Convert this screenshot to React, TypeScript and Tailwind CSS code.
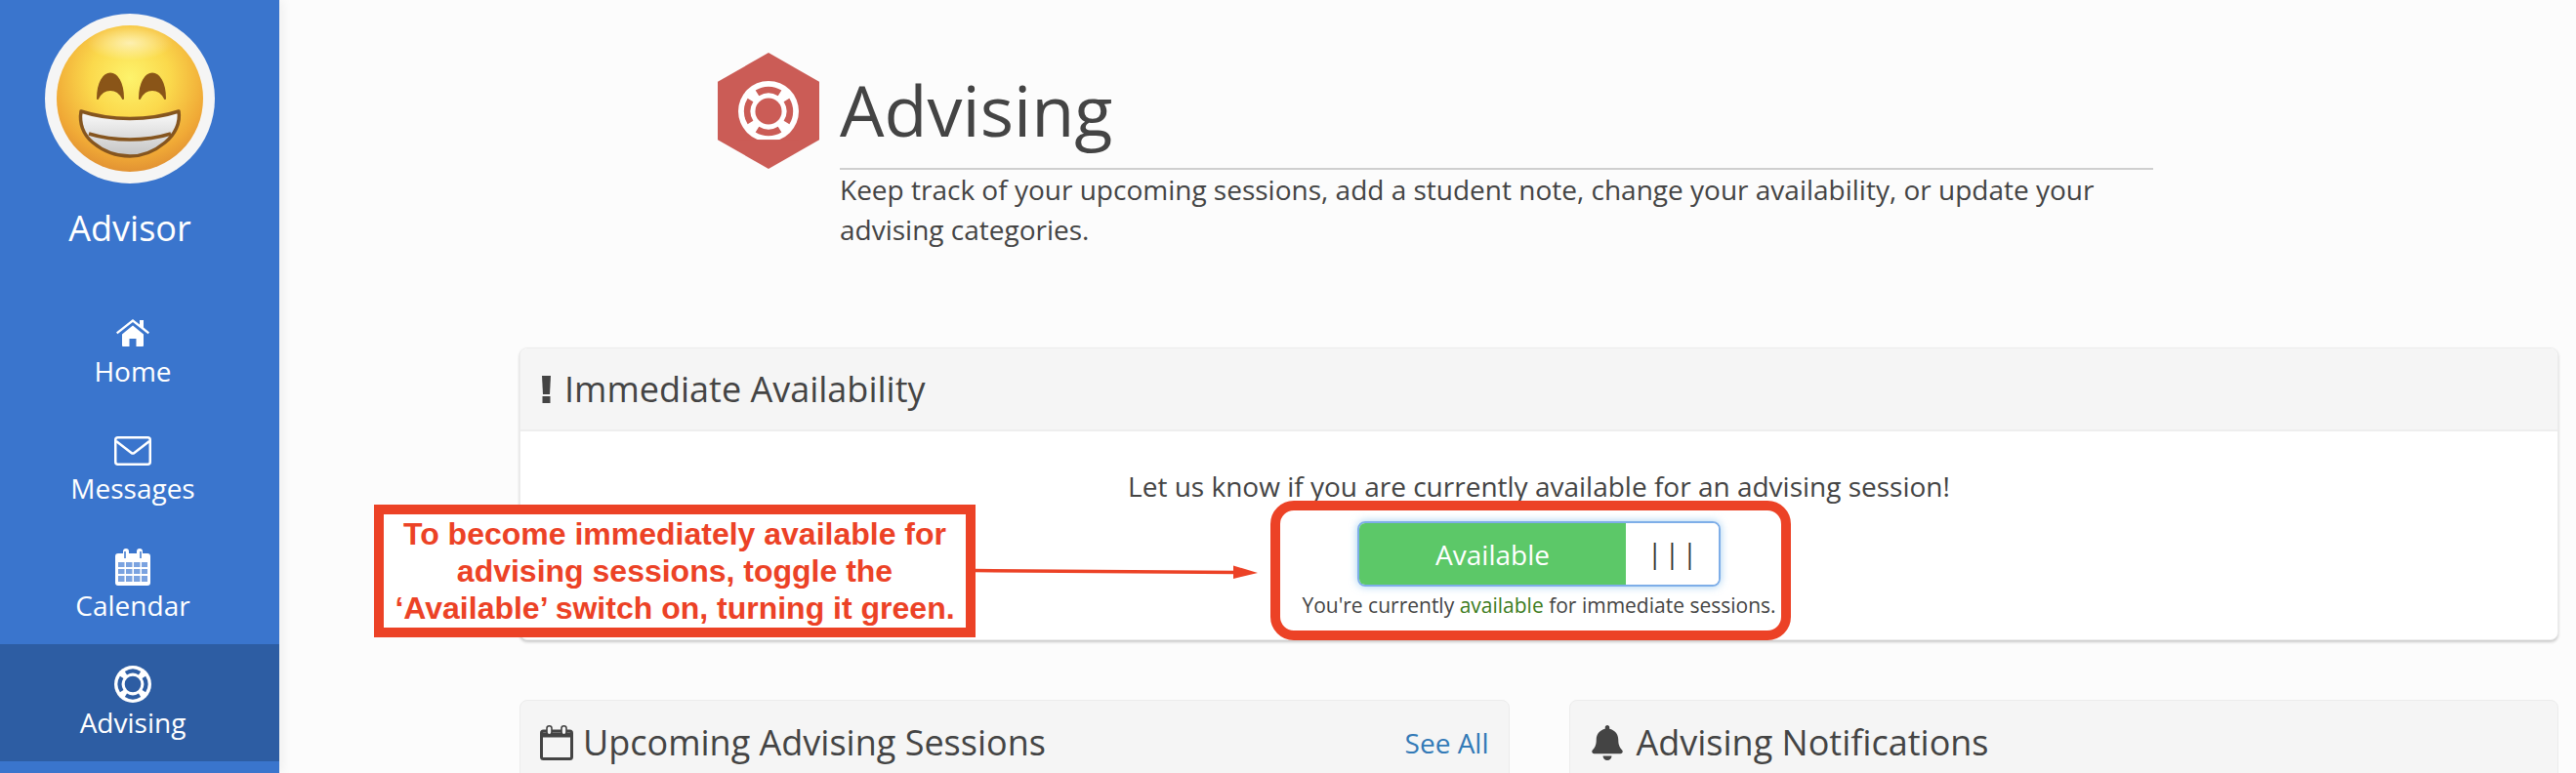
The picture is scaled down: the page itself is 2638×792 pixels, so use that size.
import React, { FC } from 'react';
import { FaBell } from 'react-icons/fa';

interface LifeRingProps {
    size: number;
    cut: string;
    flat?: boolean;
}

// four windows in the ring plus the hole in the middle
const LifeRing: FC<LifeRingProps> = ({ size, cut, flat }) => (
    <svg width={size} height={size} viewBox="0 0 64 64">
        <circle cx="32" cy="32" r="32" fill="#fff" />
        <circle cx="32" cy="32" r="14" fill={cut} />
        <g fill="none" stroke={cut} strokeWidth="7">
            <path d="M20.1 12.9a22.5 22.5 0 0 1 23.8 0" />
            <path d="M51.1 20.1a22.5 22.5 0 0 1 0 23.8" />
            <path d="M43.9 51.1a22.5 22.5 0 0 1-23.8 0" />
            <path d="M12.9 43.9a22.5 22.5 0 0 1 0-23.8" />
        </g>
        {flat && <rect x="0" y="62" width="64" height="2" fill={cut} />}
    </svg>
);

const HomeIcon = () => (
    <svg width="34" height="28" viewBox="0 0 34 28" fill="#fff">
        <path d="M0 13.5L17 0l7 5.5V1h4v7.6l6 4.9-1.4 1.8L17 3 1.4 15.3z" />
        <path d="M6 15.5L17 6.5l11 9V27a1 1 0 0 1-1 1h-6.5v-8h-7v8H7a1 1 0 0 1-1-1z" />
    </svg>
);

const EnvelopeIcon = () => (
    <svg width="38" height="30" viewBox="0 0 38 30" fill="none" stroke="#fff" strokeWidth="2.5">
        <rect x="1.25" y="1.25" width="35.5" height="27.5" rx="2.5" />
        <path d="M2 5l15.5 12a2.5 2.5 0 0 0 3 0L36 5" />
    </svg>
);

const CalendarGrid = () => (
    <svg width="36" height="38" viewBox="0 0 36 38" fill="none">
        <path d="M3 5h5V3a3 3 0 0 1 6 0v2h8V3a3 3 0 0 1 6 0v2h5a3 3 0 0 1 3 3v27a3 3 0 0 1-3 3H3a3 3 0 0 1-3-3V8a3 3 0 0 1 3-3z" fill="#fff" />
        <path d="M10 3v7M26 3v7" stroke="#3a75cd" strokeWidth="1.5" />
        <g fill="#7ba3e0">
            <rect x="3" y="14" width="6.5" height="5" />
            <rect x="11" y="14" width="6.5" height="5" />
            <rect x="19" y="14" width="6.5" height="5" />
            <rect x="27" y="14" width="6" height="5" />
            <rect x="3" y="21" width="6.5" height="5" />
            <rect x="11" y="21" width="6.5" height="5" />
            <rect x="19" y="21" width="6.5" height="5" />
            <rect x="27" y="21" width="6" height="5" />
            <rect x="3" y="28" width="6.5" height="6" />
            <rect x="11" y="28" width="6.5" height="6" />
            <rect x="19" y="28" width="6.5" height="6" />
            <rect x="27" y="28" width="6" height="6" />
        </g>
    </svg>
);

const CalendarOutline = () => (
    <svg width="34" height="36" viewBox="0 0 34 36" fill="none">
        <rect x="1.5" y="6" width="31" height="28.5" rx="2" stroke="#444" strokeWidth="3" />
        <path d="M1.5 10h31" stroke="#444" strokeWidth="5" />
        <rect x="7" y="0.8" width="5" height="9" rx="2.5" fill="#f5f5f5" stroke="#444" strokeWidth="1.6" />
        <rect x="22" y="0.8" width="5" height="9" rx="2.5" fill="#f5f5f5" stroke="#444" strokeWidth="1.6" />
    </svg>
);

const ExclamationMark = () => (
    <svg width="9" height="28" viewBox="0 0 9 28" fill="#444">
        <path d="M0 0h9L8 19H1z" />
        <rect x="0.5" y="21" width="8" height="7" />
    </svg>
);

const GrinFace = () => (
    <svg width="150" height="150" viewBox="0 0 150 150">
        <defs>
            <radialGradient id="face" cx="50%" cy="36%" r="68%">
                <stop offset="0%" stopColor="#fdf36c" />
                <stop offset="40%" stopColor="#fbd94c" />
                <stop offset="78%" stopColor="#f0a936" />
                <stop offset="100%" stopColor="#dd8a32" />
            </radialGradient>
            <radialGradient id="shine" cx="50%" cy="50%" r="50%">
                <stop offset="0%" stopColor="#fff" stopOpacity="0.55" />
                <stop offset="100%" stopColor="#fff" stopOpacity="0" />
            </radialGradient>
            <linearGradient id="tooth" x1="0" y1="0" x2="0" y2="1">
                <stop offset="0%" stopColor="#fbfbfb" />
                <stop offset="100%" stopColor="#c4c4c4" />
            </linearGradient>
        </defs>
        <circle cx="75" cy="75" r="75" fill="url(#face)" />
        <ellipse cx="75" cy="18" rx="44" ry="18" fill="url(#shine)" />
        <path d="M42 75c0-34 26-34 26 0-6-12-20-12-26 0z" fill="#8a5518" stroke="#8a5518" strokeWidth="2" strokeLinejoin="round" />
        <path d="M85 75c0-34 26-34 26 0-6-12-20-12-26 0z" fill="#8a5518" stroke="#8a5518" strokeWidth="2" strokeLinejoin="round" />
        <path d="M25 88c30 10 70 10 100 0 2 12-4 24-14 32-12 10-24 14-36 14s-26-4-38-14C27 112 23 100 25 88z" fill="url(#tooth)" stroke="#85551f" strokeWidth="3.5" strokeLinejoin="round" />
        <path d="M33 111c26 8 58 8 84 0" fill="none" stroke="#85551f" strokeWidth="3.5" />
    </svg>
);

const navItems = [
    { label: 'Home', icon: <HomeIcon />, wrap: 'pb-[5px]', active: false },
    { label: 'Messages', icon: <EnvelopeIcon />, wrap: 'pb-[3px]', active: false },
    { label: 'Calendar', icon: <CalendarGrid />, wrap: 'pb-0', active: false },
    { label: 'Advising', icon: <LifeRing size={38} cut="#2d5da3" />, wrap: 'pb-0', active: true },
];

const Sidebar = () => (
    <aside className="w-[286px] h-full shrink-0 bg-[#3a75cd] text-white shadow-[4px_0_10px_rgba(0,0,0,0.05)]">
        <div className="mt-[14px] ml-[46px] w-[174px] h-[174px] rounded-full bg-[#f5f5f5] flex items-center justify-center">
            <GrinFace />
        </div>
        <div className="w-[266px] text-center text-[36px] leading-[50px] mt-[21px]">Advisor</div>
        <nav className="mt-[41px]">
            {navItems.map((item) => (
                <div key={item.label} className={item.active ? 'h-[120px] bg-[#2d5da3]' : 'h-[120px]'}>
                    <div className={`w-[272px] h-[60px] flex items-end justify-center ${item.wrap}`}>{item.icon}</div>
                    <div className="w-[272px] text-center text-[28px] leading-[40px]">{item.label}</div>
                </div>
            ))}
        </nav>
    </aside>
);

const PageHeading = () => (
    <div className="ml-[449px] pt-[54px] flex gap-[21px]">
        <div className="w-[104px] h-[119px] flex items-center justify-center bg-[#cb5c56] [clip-path:polygon(50%_0,100%_25%,100%_75%,50%_100%,0_75%,0_25%)]">
            <LifeRing size={62} cut="#cb5c56" flat />
        </div>
        <div className="w-[1345px]">
            <h1 className="h-[120px] border-b-2 border-[#cfcfcf] text-[72px] leading-[116px] text-[#444]">Advising</h1>
            <p className="text-[28px] leading-[41px] text-[#444]">
                Keep track of your upcoming sessions, add a student note, change your availability, or update your advising categories.
            </p>
        </div>
    </div>
);

const Availability = () => (
    <section className="mt-[100px] ml-[246px] mr-[18px] h-[300px] rounded-[8px] bg-white border border-[#ececec] shadow-[0_2px_3px_rgba(0,0,0,0.2)] overflow-hidden">
        <div className="h-[85px] px-[22px] flex items-center gap-[14px] bg-[#f5f5f5] border-b-2 border-[#eeeeee] text-[#444]">
            <ExclamationMark />
            <h2 className="text-[36px]">Immediate Availability</h2>
        </div>
        <div className="flex flex-col items-center text-[#444]">
            <p className="mt-[37px] text-[28px] leading-[38px]">Let us know if you are currently available for an advising session!</p>
            <div className="mt-[17px] w-[372px] h-[67px] rounded-[8px] border-2 border-[#7eaee8] shadow-[0_0_8px_rgba(102,175,233,0.6)] overflow-hidden flex">
                <div className="w-[273px] bg-[#5cc868] text-white text-[28px] flex items-center justify-center">Available</div>
                <div className="flex-1 bg-white flex items-center justify-center text-[27px] tracking-[3px] pl-[3px] text-[#333]">|||</div>
            </div>
            <p className="mt-[4px] text-[21px] leading-[30px]">
                You're currently <span className="text-[#3c7c1c]">available</span> for immediate sessions.
            </p>
        </div>
    </section>
);

const LowerCards = () => (
    <div className="mt-[61px] ml-[246px] mr-[18px] grid grid-cols-2 gap-[61px]">
        <section className="h-[200px] rounded-[8px] bg-[#f5f5f5] border border-[#ececec] px-[20px] pt-[20px]">
            <div className="flex items-center gap-[10px] text-[#444] h-[45px]">
                <CalendarOutline />
                <h2 className="flex-1 text-[36px]">Upcoming Advising Sessions</h2>
                <a className="text-[28px] text-[#337ab7]">See All</a>
            </div>
        </section>
        <section className="h-[200px] rounded-[8px] bg-[#f5f5f5] border border-[#ececec] px-[20px] pt-[20px]">
            <div className="flex items-center gap-[12px] text-[#444] h-[45px]">
                <FaBell size={36} />
                <h2 className="text-[36px]">Advising Notifications</h2>
            </div>
        </section>
    </div>
);

// red notes laid over the screenshot
const Annotations = () => (
    <>
        <div className="absolute left-[383px] top-[517px] w-[616px] h-[136px] border-[10px] border-[#ec4226] bg-white flex items-center justify-center text-center font-['Liberation_Sans',sans-serif] font-bold text-[32px] leading-[38px] text-[#ec4226]">
            <div>
                To become immediately available for<br />
                advising sessions, toggle the<br />
                ‘Available’ switch on, turning it green.
            </div>
        </div>
        <div className="absolute left-[1301px] top-[513px] w-[533px] h-[143px] border-[10px] border-[#ec4226] rounded-[24px]" />
        <svg className="absolute left-[997px] top-[570px]" width="295" height="30" viewBox="0 0 295 30">
            <path d="M0 14.5L270 16.5" stroke="#ec4226" strokeWidth="3.5" />
            <path d="M266 9.5L291 17L266 23z" fill="#ec4226" />
        </svg>
    </>
);

const App = () => {
    return (
        <div className="relative w-[2638px] h-[792px] overflow-hidden flex bg-[#fcfcfc] font-['Open_Sans',sans-serif]">
            <Sidebar />
            <main className="flex-1">
                <PageHeading />
                <Availability />
                <LowerCards />
            </main>
            <Annotations />
        </div>
    );
};

export default App;
